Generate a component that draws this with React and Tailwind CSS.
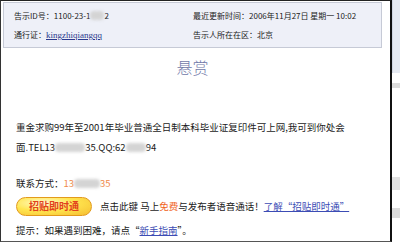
import React from "react";

const Blur = ({ w }) => (
  <span
    className="inline-block align-middle h-[9px] bg-[#d4d4d4] blur-[1.5px] rounded-sm"
    style={{ width: w }}
  />
);

export default function App() {
  const cjk = { fontFamily: '"Noto Sans CJK SC", "Noto Sans", sans-serif' };
  return (
    <div className="w-[400px] h-[243px] bg-white flex overflow-hidden" style={cjk}>
      <div className="w-[392px] h-[242px] border-t border-l border-b border-r-2 border-t-[#222] border-l-[#333] border-b-[#555] border-r-[#111] flex flex-col shrink-0">
        {/* header info box */}
        <div className="mt-[1px] ml-[2px] w-[379px] h-[46px] bg-[#eef0f8] border border-[#c6cad6] pt-[3px] pl-[10px] text-[8px] text-[#222] leading-[19px]">
          <div className="flex">
            <div className="w-[179px] flex items-center">
              <span>告示ID号：1100-23-1</span>
              <Blur w={14} />
              <span>2</span>
            </div>
            <div>最近更新时间：2006年11月27日 星期一 10:02</div>
          </div>
          <div className="flex">
            <div className="w-[179px]">
              <span>通行证：</span>
              <span
                className="underline text-[#2b3a8e] text-[9px]"
                style={{ fontFamily: '"Liberation Serif", serif' }}
              >
                kingzhiqiangqq
              </span>
            </div>
            <div>告示人所在在区：北京</div>
          </div>
        </div>

        {/* title */}
        <div className="mt-[9px] leading-[20px] text-[16px] font-light text-[#7078a8] text-center pr-[6px]">
          悬赏
        </div>

        {/* body */}
        <div className="mt-[40px] pl-[15px] text-[9.5px] leading-[20px] text-[#1a1a1a]">
          <div>重金求购99年至2001年毕业普通全日制本科毕业证复印件可上网,我可到你处会</div>
          <div className="flex items-center">
            <span>面.TEL13</span>
            <Blur w={30} />
            <span>35.QQ:62</span>
            <Blur w={20} />
            <span>94</span>
          </div>

          <div className="mt-[16px] flex items-center">
            <span>联系方式：</span>
            <span className="text-[#f08a4a]">13</span>
            <Blur w={26} />
            <span className="text-[#f08a4a]">35</span>
          </div>

          <div className="mt-[3px] h-[20px] flex items-center">
            <div className="w-[76px] h-[19px] rounded-full border border-[#e39a1c] bg-[radial-gradient(ellipse_at_35%_30%,#fffbd0_0%,#ffe650_45%,#f5bd30_100%)] flex items-center justify-center text-[10px] font-bold text-[#e2421c] leading-none">
              招贴即时通
            </div>
            <span className="ml-[8px]">点击此键 马上</span>
            <span className="text-[#f0641e]">免费</span>
            <span>与发布者语音通话！</span>
            <span className="underline text-[#3c4cb4]">了解“招贴即时通”</span>
          </div>

          <div className="mt-[4px]">
            <span>提示：如果遇到困难，请点“</span>
            <span className="underline text-[#3c4cb4]">新手指南</span>
            <span>”。</span>
          </div>
        </div>
      </div>

      {/* right strip */}
      <div className="flex-1 flex flex-col">
        <div className="h-[73px] bg-[#e6eaf2] border-l border-[#d0d6e2]" />
        <div className="mt-[10px] h-[5px] bg-[#dcdcdc]" />
        <div className="mt-[89px] h-[13px] bg-[#e2e2e2]" />
        <div className="mt-[18px] h-[10px] bg-[#dcdcdc]" />
      </div>
    </div>
  );
}
